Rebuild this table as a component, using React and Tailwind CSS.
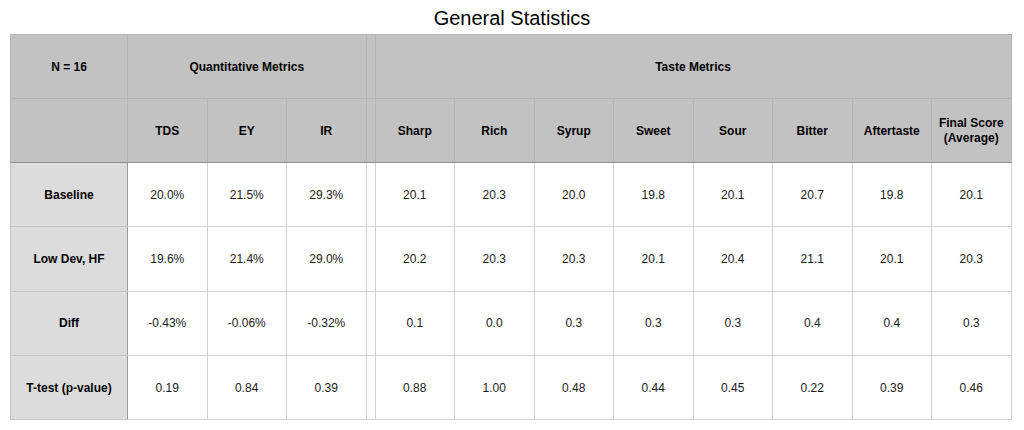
import React from "react";

const taste = ["Sharp", "Rich", "Syrup", "Sweet", "Sour", "Bitter", "Aftertaste"];

const rows = [
  { label: "Baseline", quant: ["20.0%", "21.5%", "29.3%"], taste: ["20.1", "20.3", "20.0", "19.8", "20.1", "20.7", "19.8", "20.1"] },
  { label: "Low Dev, HF", quant: ["19.6%", "21.4%", "29.0%"], taste: ["20.2", "20.3", "20.3", "20.1", "20.4", "21.1", "20.1", "20.3"] },
  { label: "Diff", quant: ["-0.43%", "-0.06%", "-0.32%"], taste: ["0.1", "0.0", "0.3", "0.3", "0.3", "0.4", "0.4", "0.3"] },
  { label: "T-test (p-value)", quant: ["0.19", "0.84", "0.39"], taste: ["0.88", "1.00", "0.48", "0.44", "0.45", "0.22", "0.39", "0.46"] },
];

const App = () => {
  return (
    <div className="w-[1024px] h-[430px] bg-white px-[10px] font-['Liberation_Sans',Arial,sans-serif] text-black">
      <div className="h-[34px] flex items-center justify-center text-[20px] pt-[1px]">
        General Statistics
      </div>

      <table className="w-[1000px] table-fixed border-collapse text-[12px]">
        <colgroup>
          <col className="w-[117px]" />
          <col className="w-[79.5px]" />
          <col className="w-[79.5px]" />
          <col className="w-[79.5px]" />
          <col className="w-[9px]" />
          {taste.map((t) => (
            <col key={t} className="w-[79.5px]" />
          ))}
          <col className="w-[79.5px]" />
        </colgroup>
        <thead className="bg-[#c1c2c1] font-bold">
          <tr className="h-[64px]">
            <th className="border border-[#b3b4b3]">N = 16</th>
            <th colSpan={3} className="border border-[#b3b4b3]">Quantitative Metrics</th>
            <th className="border border-[#b3b4b3]"></th>
            <th colSpan={8} className="border border-[#b3b4b3]">Taste Metrics</th>
          </tr>
          <tr className="h-[64px]">
            <th className="border border-[#b3b4b3] border-b-[#8e8e8e]"></th>
            {["TDS", "EY", "IR"].map((h) => (
              <th key={h} className="border border-[#b3b4b3] border-b-[#8e8e8e]">{h}</th>
            ))}
            <th className="border border-[#b3b4b3] border-b-[#8e8e8e]"></th>
            {taste.map((h) => (
              <th key={h} className="border border-[#b3b4b3] border-b-[#8e8e8e]">{h}</th>
            ))}
            <th className="border border-[#b3b4b3] border-b-[#8e8e8e] leading-[15px]">
              Final Score
              <br />
              (Average)
            </th>
          </tr>
        </thead>
        <tbody className="text-[#1a1a1a]">
          {rows.map((r) => (
            <tr key={r.label} className="h-[64.3px]">
              <td className="bg-[#dcdcdc] border border-[#c4c4c4] border-r-[#9a9a9a] text-center font-bold text-black">
                {r.label}
              </td>
              {r.quant.map((v, i) => (
                <td key={i} className="border border-[#d3d3d3] text-center">{v}</td>
              ))}
              <td className="border border-[#d3d3d3]"></td>
              {r.taste.map((v, i) => (
                <td key={i} className="border border-[#d3d3d3] text-center">{v}</td>
              ))}
            </tr>
          ))}
        </tbody>
      </table>
    </div>
  );
};

export default App;
